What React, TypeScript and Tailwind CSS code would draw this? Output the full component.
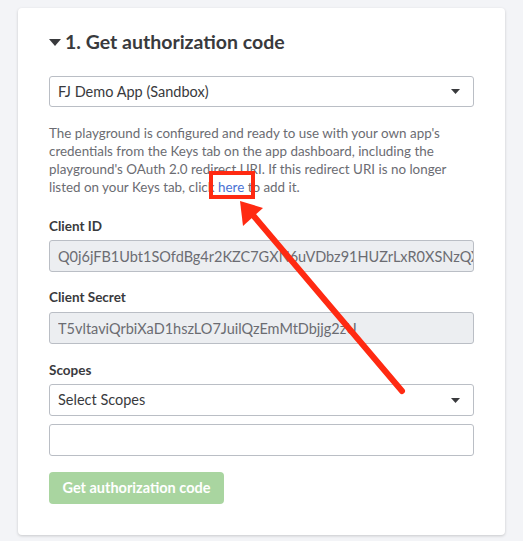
import React from "react";

function Caret({ className = "" }: { className?: string }) {
  return (
    <svg className={className} width="9" height="5" viewBox="0 0 9 5">
      <path d="M0 0 L9 0 L4.5 5 Z" fill="#393a3d" />
    </svg>
  );
}

export default function App() {
  return (
    <div className="relative w-[523px] h-[541px] bg-[#f3f4f7] pt-[8px] pl-[18px] font-[Lato,sans-serif]">
      <div className="w-[487px] h-[527px] bg-white rounded-[4px] shadow-[0_1px_3px_rgba(0,0,0,0.18)] px-[31px] pt-[19px]">
        <div className="flex items-center h-[30px]">
          <svg width="12" height="7" viewBox="0 0 12 7" className="mr-[4px]">
            <path d="M0 0 L12 0 L6 7 Z" fill="#393a3d" />
          </svg>
          <h2 className="text-[19.5px] font-bold text-[#393a3d] leading-[30px]">1. Get authorization code</h2>
        </div>

        <div className="mt-[19px] h-[31px] border border-[#babec5] rounded-[3px] flex items-center justify-between pl-[8px] pr-[13px]">
          <span className="text-[14.5px] text-[#393a3d]">FJ Demo App (Sandbox)</span>
          <Caret />
        </div>

        <p className="mt-[17px] text-[13.4px] leading-[18px] text-[#6b6c72] w-[400px]">
          The playground is configured and ready to use with your own app's credentials from the Keys tab on the app dashboard, including the playground's OAuth 2.0 redirect URI. If this redirect URI is no longer listed on your Keys tab, click{" "}
          <span className="text-[#4a72d4]">here</span> to add it.
        </p>

        <div className="mt-[21px] text-[13.5px] font-bold text-[#393a3d] leading-[18px]">Client ID</div>
        <input
          readOnly
          value="Q0j6jFB1Ubt1SOfdBg4r2KZC7GXN6uVDbz91HUZrLxR0XSNzQXnkJ8"
          className="mt-[5px] block w-full h-[32px] border border-[#babec5] rounded-[3px] bg-[#eceef1] pl-[8px] text-[14.5px] text-[#6b6c72] outline-none"
        />

        <div className="mt-[16px] text-[13.5px] font-bold text-[#393a3d] leading-[18px]">Client Secret</div>
        <input
          readOnly
          value="T5vltaviQrbiXaD1hszLO7JuilQzEmMtDbjjg2zU"
          className="mt-[6px] block w-full h-[32px] border border-[#babec5] rounded-[3px] bg-[#eceef1] pl-[8px] text-[14.5px] text-[#6b6c72] outline-none"
        />

        <div className="mt-[17px] text-[13.5px] font-bold text-[#393a3d] leading-[18px]">Scopes</div>
        <div className="mt-[5px] h-[32px] border border-[#babec5] rounded-[3px] flex items-center justify-between pl-[8px] pr-[13px]">
          <span className="text-[14.5px] text-[#393a3d]">Select Scopes</span>
          <Caret />
        </div>
        <div className="mt-[8px] h-[32px] border border-[#babec5] rounded-[3px]" />

        <button className="mt-[16px] h-[32px] w-[175px] rounded-[4px] bg-[#a9d5a0] text-white text-[14.5px] font-bold">
          Get authorization code
        </button>
      </div>

      <svg className="absolute left-0 top-0 pointer-events-none" width="523" height="541" viewBox="0 0 523 541">
        <rect x="211" y="173" width="42" height="24" fill="none" stroke="#ff2a12" strokeWidth="4" />
        <line x1="252" y1="214" x2="402" y2="391" stroke="#ff2a12" strokeWidth="6" strokeLinecap="round" />
        <polygon points="240,201 263,208 243,226" fill="#ff2a12" />
      </svg>
    </div>
  );
}
